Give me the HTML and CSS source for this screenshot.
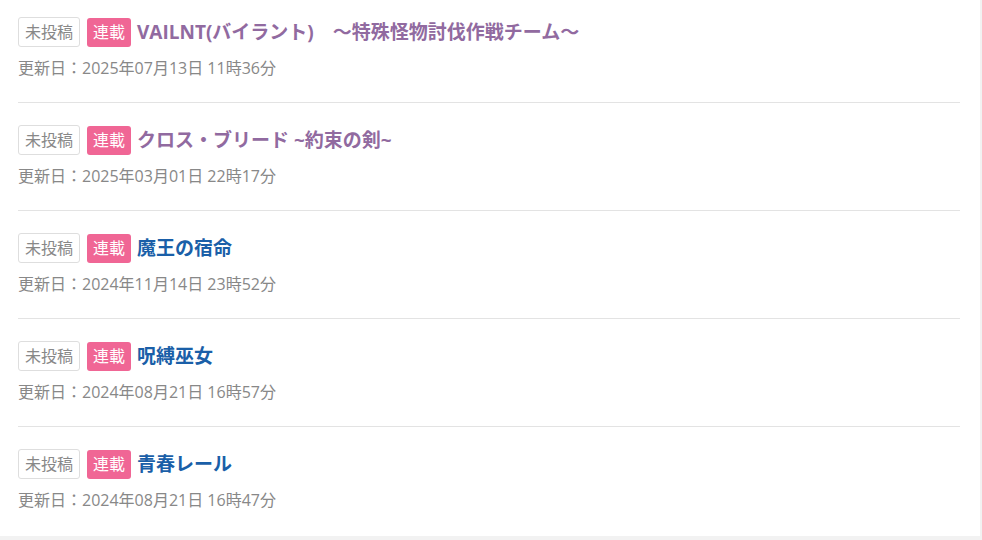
FILE: index.html
```html
<!DOCTYPE html>
<html lang="ja">
<head>
<meta charset="utf-8">
<link rel="stylesheet" href="styles.css">
</head>
<body>
<div class="card">
  <ul class="list">
    <li class="item">
      <div class="head"><span class="tag tag-draft">未投稿</span><span class="tag tag-serial">連載</span><a class="title visited" href="#">VAILNT(バイラント)　～特殊怪物討伐作戦チーム～</a></div>
      <div class="date">更新日：2025年07月13日 11時36分</div>
    </li>
    <li class="item">
      <div class="head"><span class="tag tag-draft">未投稿</span><span class="tag tag-serial">連載</span><a class="title visited" href="#">クロス・ブリード ~約束の剣~</a></div>
      <div class="date">更新日：2025年03月01日 22時17分</div>
    </li>
    <li class="item">
      <div class="head"><span class="tag tag-draft">未投稿</span><span class="tag tag-serial">連載</span><a class="title" href="#">魔王の宿命</a></div>
      <div class="date">更新日：2024年11月14日 23時52分</div>
    </li>
    <li class="item">
      <div class="head"><span class="tag tag-draft">未投稿</span><span class="tag tag-serial">連載</span><a class="title" href="#">呪縛巫女</a></div>
      <div class="date">更新日：2024年08月21日 16時57分</div>
    </li>
    <li class="item">
      <div class="head"><span class="tag tag-draft">未投稿</span><span class="tag tag-serial">連載</span><a class="title" href="#">青春レール</a></div>
      <div class="date">更新日：2024年08月21日 16時47分</div>
    </li>
  </ul>
</div>
</body>
</html>
```
FILE: styles.css
```css
html, body {
  margin: 0;
  padding: 0;
  background: #f2f2f2;
}
body {
  font-family: "Open Sans", "Noto Sans CJK JP", sans-serif;
  width: 982px;
  height: 540px;
  overflow: hidden;
}
.card {
  background: #ffffff;
  width: 980px;
  height: 536px;
}
.list {
  list-style: none;
  margin: 0;
  padding: 0 20px 0 18px;
}
.item {
  padding: 22px 0 23px;
  border-bottom: 1px solid #e3e3e3;
}
.item:first-child {
  padding-top: 17px;
}
.item:last-child {
  border-bottom: none;
}
.head {
  display: flex;
  align-items: center;
  height: 30px;
}
.tag {
  display: flex;
  align-items: center;
  justify-content: center;
  box-sizing: border-box;
  font-size: 16px;
  line-height: 1;
  border-radius: 3px;
}
.tag-draft {
  width: 62px;
  height: 30px;
  border: 1px solid #dedede;
  color: #888888;
  margin-right: 7px;
}
.tag-serial {
  width: 44px;
  height: 29px;
  background: #f06695;
  color: #ffffff;
  margin-right: 6px;
}
.title {
  font-size: 19px;
  font-weight: bold;
  text-decoration: none;
  color: #1a5fa8;
  line-height: 30px;
}
.title.visited {
  color: #916aa0;
}
.date {
  margin-top: 10px;
  font-size: 16px;
  line-height: 22px;
  color: #888888;
}
```
